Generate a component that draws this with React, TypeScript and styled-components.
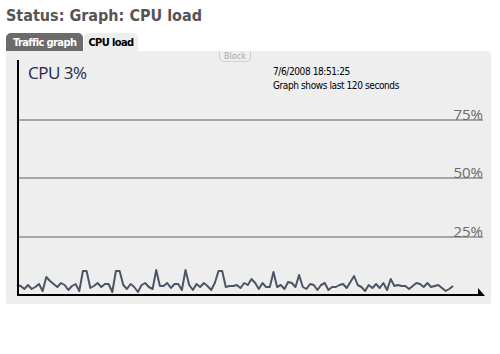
import React from "react";
import styled, { createGlobalStyle } from "styled-components";

const GlobalStyle = createGlobalStyle`
  html, body {
    margin: 0;
    padding: 0;
    background: #fff;
  }
  body {
    font-family: "DejaVu Sans Condensed", "DejaVu Sans", sans-serif;
  }
`;

//styles
const Page = styled.div`
  width: 485px;
  padding: 6px 0 0 6px;
`;

const Title = styled.h1`
  margin: 0 0 7px;
  font-size: 16px;
  line-height: 20px;
  font-weight: bold;
  color: #555;
`;

const Tabs = styled.div`
  display: flex;
  height: 18px;
`;

const Tab = styled.div<{ $active?: boolean }>`
  display: flex;
  align-items: center;
  padding: 0 ${p => (p.$active ? "4px" : "7px")};
  font-size: 11px;
  letter-spacing: -0.6px;
  font-weight: bold;
  border-radius: 5px 5px 0 0;
  background: ${p => (p.$active ? "#eeeeee" : "#6b6b6b")};
  color: ${p => (p.$active ? "#000" : "#fff")};
  margin-right: 1px;
`;

const Panel = styled.div`
  position: relative;
  height: 253px;
  box-sizing: border-box;
  padding: 9px 5px 7px 11px;
  background: #eeeeee;
  border-radius: 0 5px 5px 5px;
  box-shadow: 0 1px 1px rgba(0, 0, 0, 0.12);
`;

const BlockTag = styled.span`
  position: absolute;
  top: 0;
  left: 213px;
  height: 10px;
  padding: 0 4px;
  font-size: 9px;
  line-height: 10px;
  color: #aaa;
  border: 1px solid #cfcfcf;
  border-top: none;
  border-radius: 0 0 5px 5px;
`;

const GraphArea = styled.div`
  position: relative;
  height: 100%;
`;

const GraphSvg = styled.svg`
  position: absolute;
  inset: 0;
  width: 100%;
  height: 100%;
  overflow: visible;
`;

const Header = styled.div`
  position: relative;
  display: grid;
  grid-template-columns: 256px 1fr;
`;

const CpuValue = styled.div`
  padding: 2px 0 0 11px;
  font-family: "Open Sans", sans-serif;
  font-size: 17px;
  letter-spacing: -0.5px;
  line-height: 22px;
  color: #1c2a48;
`;

const Info = styled.div`
  padding-top: 5px;
  font-size: 10px;
  letter-spacing: -0.4px;
  line-height: 14px;
  color: #000;
`;

const GridLabel = styled.text`
  font-family: "Open Sans", sans-serif;
  font-size: 15px;
  fill: #6a6a6a;
`;

const heights = [
  8, 7, 4, 8, 4, 6, 9, 2, 16, 12, 9, 6, 10, 8, 3, 7, 9, 2, 22, 22, 5, 7, 10, 6,
  9, 9, 1, 22, 22, 8, 4, 9, 6, 1, 8, 10, 6, 4, 23, 7, 7, 10, 5, 9, 9, 3, 23, 8,
  3, 9, 6, 10, 7, 3, 10, 22, 22, 6, 7, 7, 8, 5, 10, 8, 14, 10, 4, 10, 6, 6, 21,
  6, 8, 4, 11, 10, 6, 18, 6, 4, 9, 8, 3, 8, 10, 3, 6, 6, 8, 9, 5, 11, 17, 8, 6,
  2, 8, 5, 9, 5, 10, 3, 14, 7, 8, 7, 7, 4, 7, 10, 9, 6, 10, 6, 7, 8, 5, 2, 4, 7,
];

const grid = [
  { label: "75%", y: 60 },
  { label: "50%", y: 118 },
  { label: "25%", y: 177 },
];

const App: React.FC = () => {
  const step = 436 / (heights.length - 1);
  const points = heights
    .map((h, i) => `${(i * step).toFixed(1)},${233 - h}`)
    .join(" ");

  return (
    <Page>
      <GlobalStyle />
      <Title>Status: Graph: CPU load</Title>
      <Tabs>
        <Tab>Traffic graph</Tab>
        <Tab $active>CPU load</Tab>
      </Tabs>
      <Panel>
        <BlockTag>Block</BlockTag>
        <GraphArea>
          <GraphSvg viewBox="0 0 469 237" preserveAspectRatio="none">
            {grid.map(g => (
              <g key={g.label}>
                <line x1="0" y1={g.y} x2="466" y2={g.y} stroke="#a6a6a6" strokeWidth="2" />
                <GridLabel x="466" y={g.y} textAnchor="end">
                  {g.label}
                </GridLabel>
              </g>
            ))}
            <polyline
              points={points}
              fill="none"
              stroke="#4b5566"
              strokeWidth="2"
              strokeLinejoin="round"
            />
            <line x1="1" y1="0" x2="1" y2="236" stroke="#000" strokeWidth="2" />
            <line x1="0" y1="235" x2="466" y2="235" stroke="#000" strokeWidth="2" />
            <polygon points="461,228 461,236 468,236" fill="#000" />
          </GraphSvg>
          <Header>
            <CpuValue>CPU 3%</CpuValue>
            <Info>
              <div>7/6/2008 18:51:25</div>
              <div>Graph shows last 120 seconds</div>
            </Info>
          </Header>
        </GraphArea>
      </Panel>
    </Page>
  );
};

export default App;
